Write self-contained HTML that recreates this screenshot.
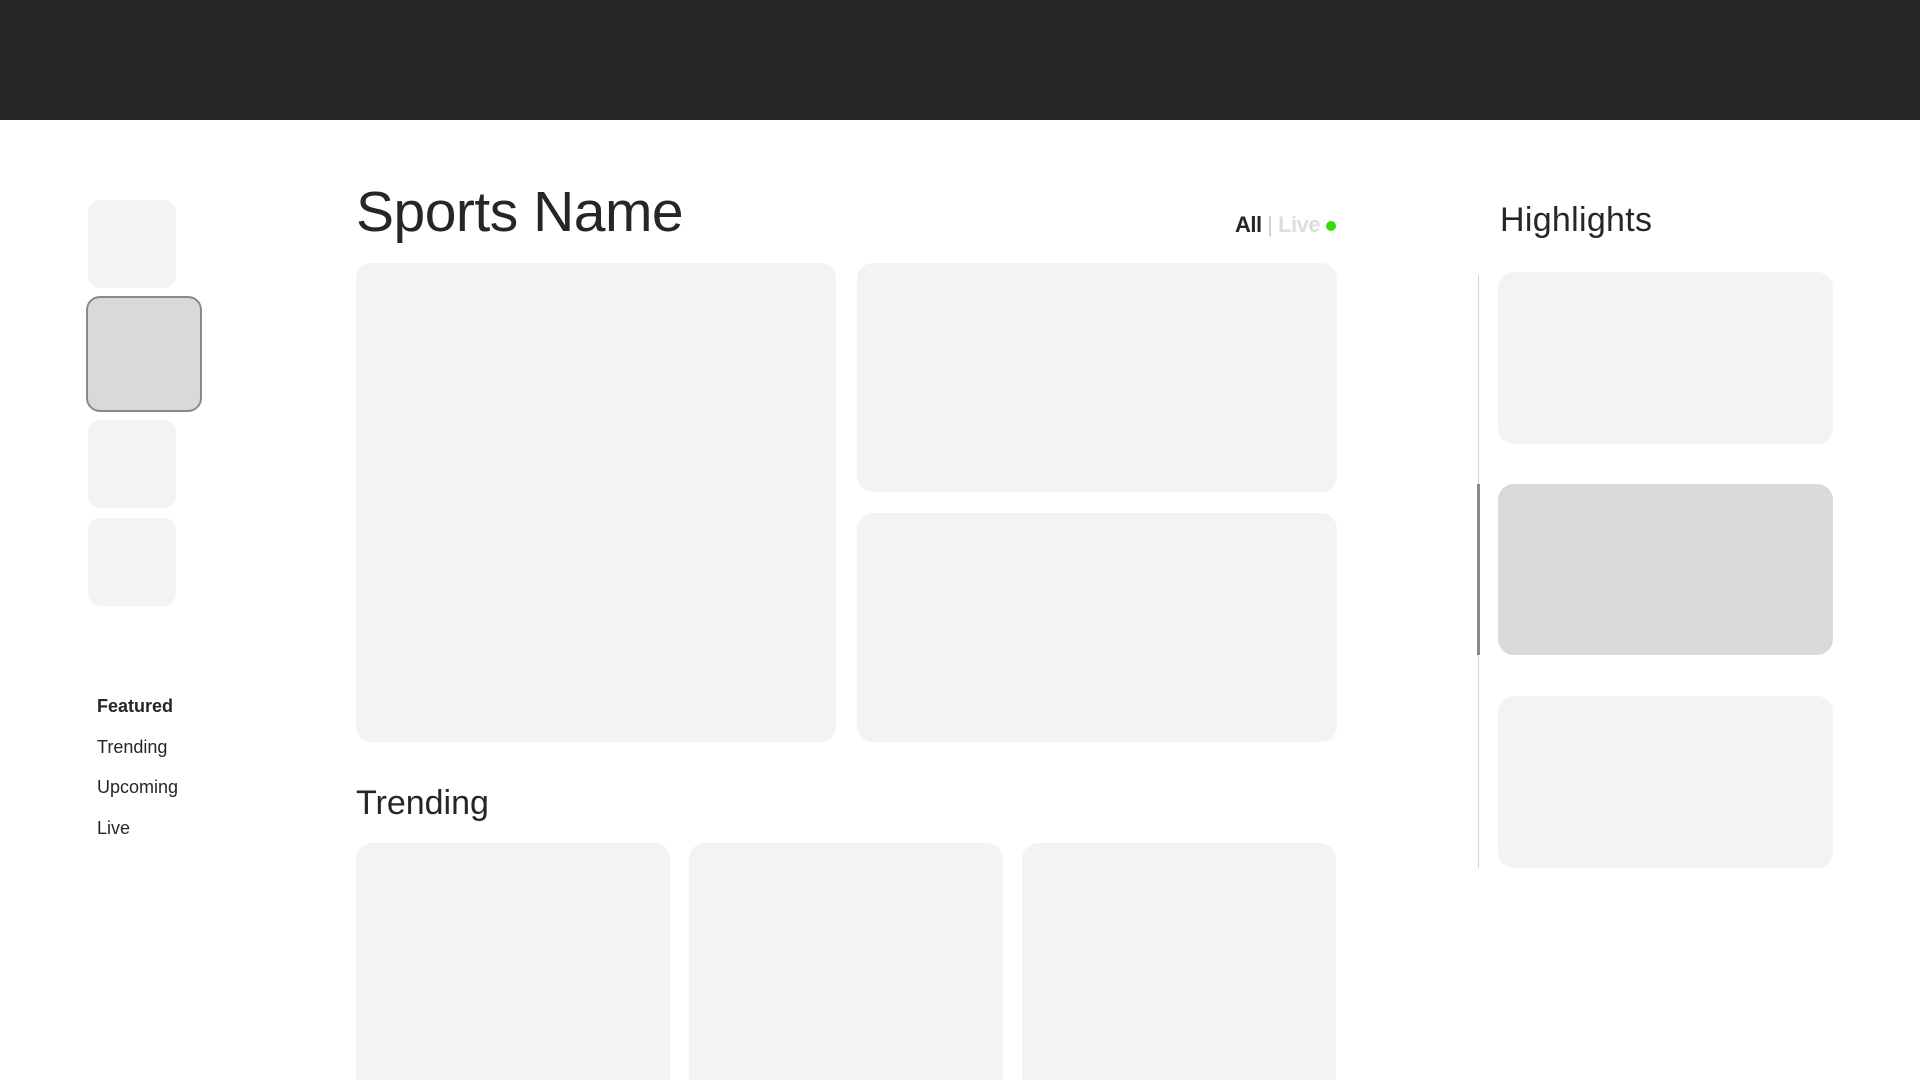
<!DOCTYPE html>
<html style="overflow:hidden;width:1920px;height:1080px"><head><style>
*{margin:0;padding:0;box-sizing:border-box}
body{width:1920px;height:1080px;overflow:hidden;background:#fff;position:relative;font-family:"Liberation Sans",sans-serif;color:#262626}
.a{position:absolute}
.c{position:absolute;background:#f3f3f3;border-radius:16px}
.t{position:absolute;line-height:1;white-space:nowrap}
</style></head><body>
<div class="a" style="left:0;top:0;width:1920px;height:120px;background:#262626"></div>
<div class="c" style="left:88px;top:200px;width:88px;height:88px;border-radius:12px"></div>
<div class="a" style="left:86px;top:296px;width:116px;height:116px;border-radius:14px;background:#d9d9d9;border:2px solid #8a8a8a"></div>
<div class="c" style="left:88px;top:420px;width:88px;height:88px;border-radius:12px"></div>
<div class="c" style="left:88px;top:518px;width:88px;height:88px;border-radius:12px"></div>
<div class="t" style="left:97px;top:697px;font-size:18px;font-weight:bold">Featured</div>
<div class="t" style="left:97px;top:738px;font-size:18px">Trending</div>
<div class="t" style="left:97px;top:778px;font-size:18px">Upcoming</div>
<div class="t" style="left:97px;top:819px;font-size:18px">Live</div>
<div class="t" style="left:356px;top:184px;font-size:57px;letter-spacing:-0.5px">Sports Name</div>
<div class="t" style="left:1235px;top:214px;font-size:22px;font-weight:bold;letter-spacing:-0.5px">All <span style="color:#ccc;font-weight:normal">|</span> <span style="color:#ddd">Live</span></div>
<div class="a" style="left:1326px;top:221px;width:10px;height:10px;border-radius:50%;background:#2ee000"></div>
<div class="c" style="left:356px;top:263px;width:480px;height:479px"></div>
<div class="c" style="left:857px;top:263px;width:480px;height:229px"></div>
<div class="c" style="left:857px;top:513px;width:480px;height:229px"></div>
<div class="t" style="left:356px;top:786px;font-size:34px;letter-spacing:0px">Trending</div>
<div class="c" style="left:356px;top:843px;width:314px;height:237px;border-radius:16px 16px 0 0"></div>
<div class="c" style="left:689px;top:843px;width:314px;height:237px;border-radius:16px 16px 0 0"></div>
<div class="c" style="left:1022px;top:843px;width:314px;height:237px;border-radius:16px 16px 0 0"></div>
<div class="t" style="left:1500px;top:203px;font-size:34px;letter-spacing:0.3px">Highlights</div>
<div class="a" style="left:1478px;top:275px;width:1px;height:593px;background:#d4d4d4"></div>
<div class="a" style="left:1477px;top:484px;width:3px;height:171px;background:#8a8a8a"></div>
<div class="c" style="left:1498px;top:272px;width:335px;height:172px"></div>
<div class="c" style="left:1498px;top:484px;width:335px;height:171px;background:#d9d9d9"></div>
<div class="c" style="left:1498px;top:696px;width:335px;height:172px"></div>
</body></html>
